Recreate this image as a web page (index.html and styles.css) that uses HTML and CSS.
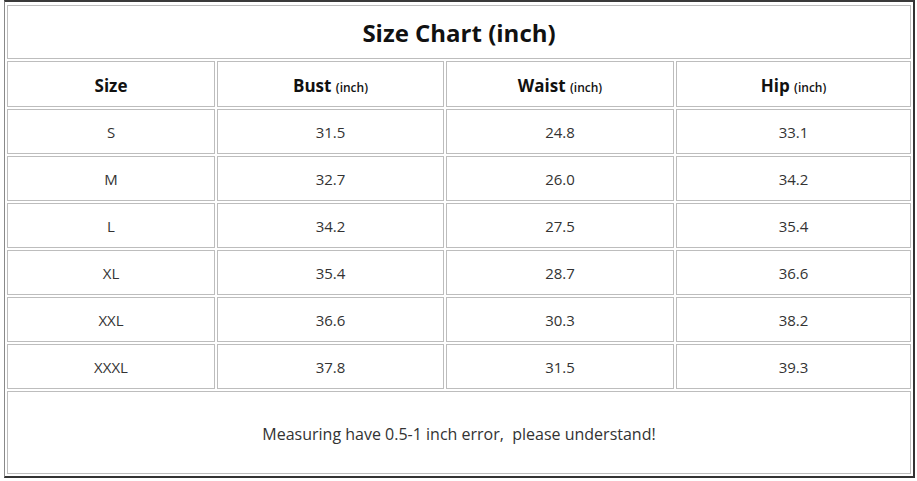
FILE: index.html
```html
<!DOCTYPE html>
<html>
<head>
<meta charset="utf-8">
<link rel="stylesheet" href="styles.css">
</head>
<body>
<table class="chart">
  <colgroup>
    <col class="c1"><col class="c2"><col class="c3"><col class="c4">
  </colgroup>
  <tr class="title-row"><td colspan="4" class="title">Size Chart (inch)</td></tr>
  <tr class="head-row">
    <th>Size</th>
    <th>Bust <span class="unit">(inch)</span></th>
    <th>Waist <span class="unit">(inch)</span></th>
    <th>Hip <span class="unit">(inch)</span></th>
  </tr>
  <tr class="data-row"><td>S</td><td>31.5</td><td>24.8</td><td>33.1</td></tr>
  <tr class="data-row"><td>M</td><td>32.7</td><td>26.0</td><td>34.2</td></tr>
  <tr class="data-row"><td>L</td><td>34.2</td><td>27.5</td><td>35.4</td></tr>
  <tr class="data-row"><td>XL</td><td>35.4</td><td>28.7</td><td>36.6</td></tr>
  <tr class="data-row"><td>XXL</td><td>36.6</td><td>30.3</td><td>38.2</td></tr>
  <tr class="data-row"><td>XXXL</td><td>37.8</td><td>31.5</td><td>39.3</td></tr>
  <tr class="note-row"><td colspan="4" class="note">Measuring have 0.5-1 inch error,&nbsp; please understand!</td></tr>
</table>
</body>
</html>
```
FILE: styles.css
```css
html, body {
  margin: 0;
  padding: 0;
  background: #fff;
}
body {
  padding: 0 0 0 4px;
  font-family: "Open Sans", "Liberation Sans", sans-serif;
  color: #333;
}
.chart {
  width: 911px;
  border-collapse: separate;
  border-spacing: 2px;
  border-top: 2px solid #3a3a3a;
  border-left: 1px solid #8a8a8a;
  border-right: 2px solid #333;
  border-bottom: 2px solid #333;
  padding-top: 1px;
  table-layout: fixed;
}
.c1 { width: 208px; }
.c2 { width: 227px; }
.c3 { width: 228px; }
.c4 { width: 235px; }
.chart td, .chart th {
  border: 1px solid #bdbdbd;
  text-align: center;
  vertical-align: middle;
  padding: 0;
}
.title-row td {
  height: 52px;
  font-size: 24px;
  font-weight: 700;
  color: #111;
}
.head-row th {
  height: 42px;
  padding-top: 2px;
  font-size: 17px;
  font-weight: 700;
  color: #111;
}
.unit {
  font-size: 12px;
  font-weight: 600;
}
.data-row td {
  height: 43px;
  font-size: 15px;
  color: #333;
}
.note-row td {
  height: 78px;
  padding-top: 3px;
  font-size: 16px;
  color: #333;
}
```
